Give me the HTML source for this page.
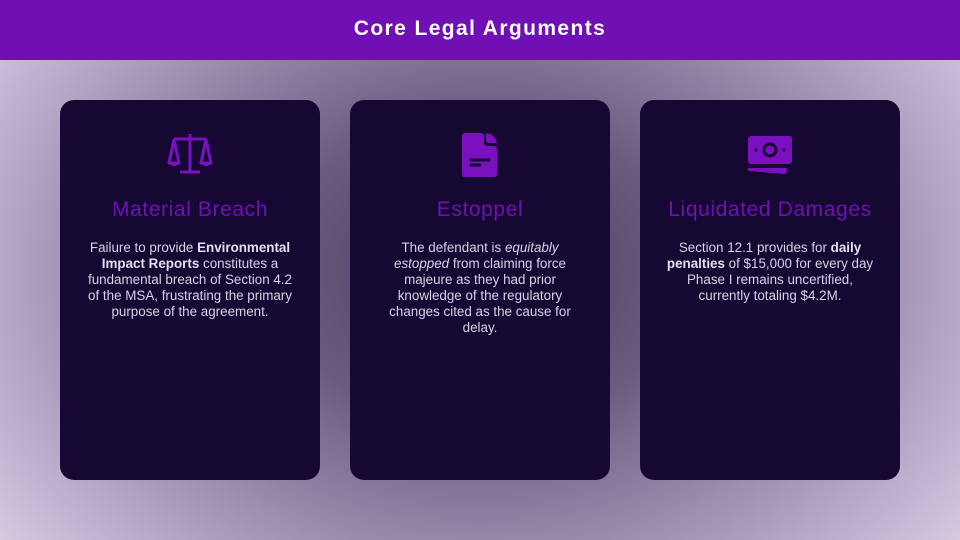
<!DOCTYPE html>
<html><head><meta charset="utf-8"><style>
body{margin:0;width:960px;height:540px;overflow:hidden;font-family:"Liberation Sans",sans-serif;
background:radial-gradient(ellipse 72% 95% at 50% 50%,#463a58 0%,#6a5d80 30%,#b3a4c4 68%,#ede2f6 100%);position:relative}
.hdr{position:absolute;left:0;top:0;width:960px;height:60px;background:#7010b4;color:#fff;text-align:center;line-height:58px;font-size:21px;font-weight:bold;letter-spacing:1.4px}
.card{position:absolute;top:100px;width:260px;height:380px;background:#150833;border-radius:14px;text-align:center}
.card svg{position:absolute;left:50%;transform:translateX(-50%);top:32px}
.t{position:absolute;top:98px;left:0;right:0;color:#7010b4;font-size:21px;letter-spacing:0.6px}
.b{position:absolute;top:140px;left:22px;right:22px;color:#d8d2e4;font-size:13.4px;line-height:16px}
.b b{color:#e4deee}
</style></head><body>
<div class="hdr">Core Legal Arguments</div>
<div class="card" style="left:60px">
<svg width="48" height="46" viewBox="0 0 48 46"><g fill="none" stroke="#7a10c0" stroke-width="3" stroke-linejoin="round">
<path d="M24 2V40M8 7H40M14 40H34"/><path d="M8 8L3 31H13Z"/><path d="M40 8L35 31H45Z"/></g>
<path d="M2 30H14Q12 34 8 34Q4 34 2 30ZM34 30H46Q44 34 40 34Q36 34 34 30Z" fill="#7a10c0"/></svg>
<div class="t">Material Breach</div>
<div class="b">Failure to provide <b>Environmental Impact Reports</b> constitutes a fundamental breach of Section 4.2 of the MSA, frustrating the primary purpose of the agreement.</div>
</div>
<div class="card" style="left:350px">
<svg width="36" height="46" viewBox="0 0 36 46"><path d="M3 1H19Q22 1 22 4V10Q22 14 26 14H32Q35 14 35 17V42Q35 45 32 45H3Q0 45 0 42V4Q0 1 3 1Z" fill="#7a10c0"/><path d="M24 1Q34 3 35 11H27Q24 11 24 8Z" fill="#7a10c0"/>
<path d="M9 28H27M9 33H18" stroke="#150833" stroke-width="3" stroke-linecap="round"/></svg>
<div class="t">Estoppel</div>
<div class="b" style="left:33px;right:33px">The defendant is <i>equitably estopped</i> from claiming force majeure as they had prior knowledge of the regulatory changes cited as the cause for delay.</div>
</div>
<div class="card" style="left:640px">
<svg width="46" height="42" viewBox="0 0 46 42" style="top:35px"><rect x="1" y="1" width="44" height="28" rx="3" fill="#7a10c0"/>
<circle cx="23" cy="15" r="6" fill="none" stroke="#150833" stroke-width="3"/><circle cx="9" cy="15" r="1.5" fill="#150833"/><circle cx="37" cy="15" r="1.5" fill="#150833"/>
<path d="M1 33H40Q40 38 38 39L2 36Q0 35 1 33Z" fill="#7a10c0"/></svg>
<div class="t">Liquidated Damages</div>
<div class="b">Section 12.1 provides for <b>daily penalties</b> of $15,000 for every day Phase I remains uncertified, currently totaling $4.2M.</div>
</div>
</body></html>
